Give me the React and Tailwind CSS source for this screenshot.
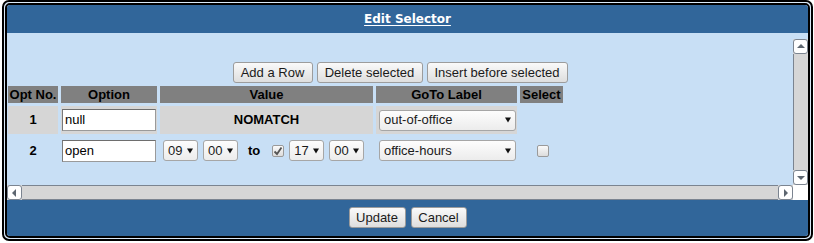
import React from "react";

const font = "font-['Liberation_Sans',Arial,sans-serif]";

function Btn({ children, className = "" }) {
  return (
    <div
      className={`flex h-[21px] items-center justify-center whitespace-nowrap rounded-[3px] border border-[#9c9c9c] bg-gradient-to-b from-[#fafafa] to-[#dedede] text-[13px] text-[#1a1a1a] ${className}`}
    >
      {children}
    </div>
  );
}

function Select({ value, width }) {
  return (
    <div
      className="flex h-[21px] shrink-0 items-center justify-between rounded-[3px] border border-[#a6a6a6] bg-gradient-to-b from-[#fdfdfd] to-[#ececec] pl-[4px] pr-[4px] text-[13px] text-[#1a1a1a]"
      style={{ width }}
    >
      <span>{value}</span>
      <svg width="6" height="6" viewBox="0 0 6 6">
        <path d="M0 0.5 L6 0.5 L3 5.5 Z" fill="#111" />
      </svg>
    </div>
  );
}

function TextInput({ value }) {
  return (
    <div className="flex h-[22px] w-[94px] items-center border border-[#9a9a9a] border-t-[#6e6e6e] border-l-[#7a7a7a] bg-white pl-[2px] text-[13px] text-black">
      {value}
    </div>
  );
}

function Checkbox({ checked }) {
  return (
    <div className="flex h-[12px] w-[12px] shrink-0 items-center justify-center rounded-[2px] border border-[#9a9a9a] bg-gradient-to-b from-[#fafafa] to-[#dcdcdc]">
      {checked ? (
        <svg width="10" height="10" viewBox="0 0 10 10">
          <path d="M1.5 5.5 L4 8 L8.5 1.5" stroke="#555" strokeWidth="1.8" fill="none" />
        </svg>
      ) : null}
    </div>
  );
}

function ArrowBtn({ dir, className = "" }) {
  const paths = {
    up: "M1 6 L5 2 L9 6 Z",
    down: "M1 3 L9 3 L5 7 Z",
    left: "M6 1 L2 5 L6 9 Z",
    right: "M3 1 L7 5 L3 9 Z",
  };
  return (
    <div className={`flex h-[15px] w-[15px] items-center justify-center rounded-[3px] border border-[#7b8490] bg-white ${className}`}>
      <svg width="10" height="10" viewBox="0 0 10 10">
        <path d={paths[dir]} fill="#5d6670" />
      </svg>
    </div>
  );
}

export default function App() {
  const head = "flex h-[17px] items-center justify-center bg-[#808080] text-[13px] font-bold text-black";
  const gray = "flex h-[28px] items-center bg-[#d6d6d6]";
  const plain = "flex h-[27px] items-center";

  return (
    <div className={`h-[243px] w-[814px] bg-white ${font}`}>
      <div className="ml-[2px] h-[241px] w-[811px] rounded-[7px] border-2 border-black bg-[#d9e8f7] p-[1px]">
        <div className="flex h-full flex-col overflow-hidden rounded-[5px] border-2 border-black">
          {/* title bar */}
          <div className="flex h-[28px] items-center justify-center bg-[#31669a]">
            <span className="font-['DejaVu_Sans',sans-serif] text-[12px] font-bold text-white underline underline-offset-[2px]">
              Edit Selector
            </span>
          </div>

          {/* body */}
          <div className="bg-[#c8dff5] pt-[6px]">
            <div className="flex h-[146px]">
              <div className="flex-1 overflow-hidden pt-[23px]">
                <div className="flex justify-center gap-[4px]">
                  <Btn className="w-[80px]">Add a Row</Btn>
                  <Btn className="w-[106px]">Delete selected</Btn>
                  <Btn className="w-[141px]">Insert before selected</Btn>
                </div>

                <div className="ml-[1px] mt-[3px] grid grid-cols-[50px_96px_213px_141px_43px] gap-x-[3px] gap-y-[3px]">
                  <div className={head}>Opt No.</div>
                  <div className={head}>Option</div>
                  <div className={head}>Value</div>
                  <div className={head}>GoTo Label</div>
                  <div className={head}>Select</div>

                  <div className={`${gray} justify-center text-[13px] font-bold`}>1</div>
                  <div className={`${gray} pl-[1px]`}>
                    <TextInput value="null" />
                  </div>
                  <div className={`${gray} justify-center text-[13px] font-bold`}>NOMATCH</div>
                  <div className={`${gray} pl-[3px]`}>
                    <Select value="out-of-office" width={137} />
                  </div>
                  <div className="h-[28px]" />

                  <div className={`${plain} justify-center text-[13px] font-bold`}>2</div>
                  <div className={`${plain} pl-[1px]`}>
                    <TextInput value="open" />
                  </div>
                  <div className={`${plain} gap-[5px] pl-[3px]`}>
                    <Select value="09" width={35} />
                    <Select value="00" width={35} />
                    <span className="ml-[5px] mr-[7px] text-[13px] font-bold">to</span>
                    <Checkbox checked />
                    <Select value="17" width={35} />
                    <Select value="00" width={35} />
                  </div>
                  <div className={`${plain} pl-[3px]`}>
                    <Select value="office-hours" width={137} />
                  </div>
                  <div className={`${plain} justify-end pr-[14px]`}>
                    <Checkbox />
                  </div>
                </div>
              </div>

              {/* vertical scrollbar */}
              <div className="flex w-[15px] flex-col bg-[#d6d6d6]">
                <ArrowBtn dir="up" />
                <div className="flex-1 border-l border-[#7b8490]" />
                <ArrowBtn dir="down" />
              </div>
            </div>

            {/* horizontal scrollbar */}
            <div className="flex h-[15px]">
              <div className="flex flex-1 bg-[#d6d6d6]">
                <ArrowBtn dir="left" />
                <div className="flex-1 border-y border-[#7b8490]" />
                <ArrowBtn dir="right" />
              </div>
              <div className="w-[15px] bg-white" />
            </div>
          </div>

          {/* footer */}
          <div className="flex flex-1 justify-center gap-[5px] bg-[#31669a] pt-[7px]">
            <Btn className="w-[57px]">Update</Btn>
            <Btn className="w-[56px]">Cancel</Btn>
          </div>
        </div>
      </div>
    </div>
  );
}
